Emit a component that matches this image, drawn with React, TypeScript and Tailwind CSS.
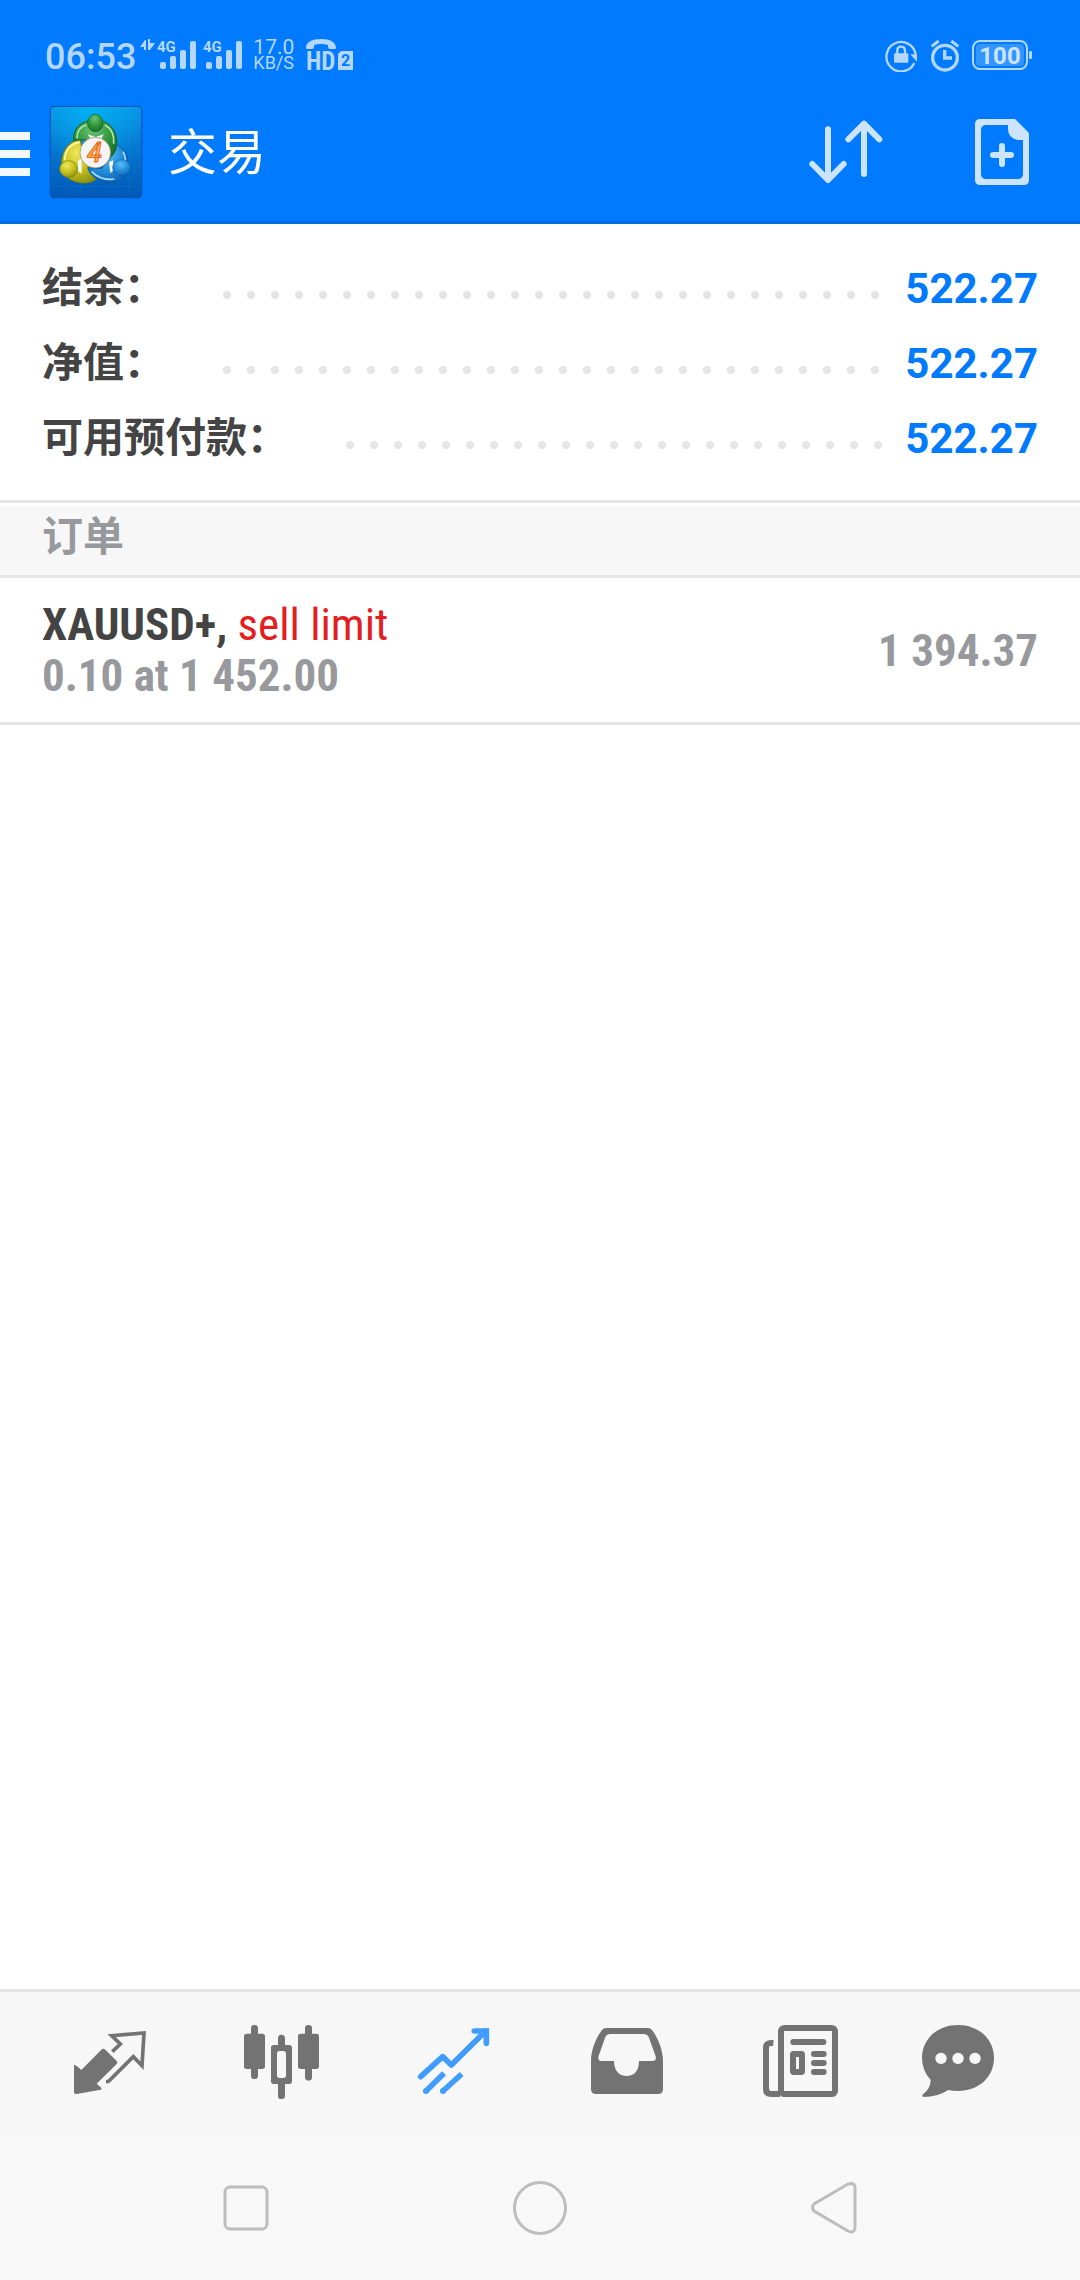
import React, { useState } from 'react';

interface AccountRow {
  label: string;
  value: string;
}

interface Order {
  symbol: string;
  type: string;
  detail: string;
  price: string;
}

const accountRows: AccountRow[] = [
  { label: '结余', value: '522.27' },
  { label: '净值', value: '522.27' },
  { label: '可用预付款', value: '522.27' },
];

const orders: Order[] = [
  { symbol: 'XAUUSD+,', type: 'sell limit', detail: '0.10 at 1 452.00', price: '1 394.37' },
];

/* Status bar icons */
function DataArrows() {
  return (
    <svg width="15" height="32" viewBox="0 0 15 32" fill="currentColor" aria-hidden="true">
      <path d="M0 8 L5 1 H6 V11 H4 V8 Z" />
      <path d="M8 0 H10 V4 H15 L10 11 H8 Z" />
    </svg>
  );
}

function Signal() {
  return (
    <svg width="40" height="32" viewBox="0 0 40 32" fill="currentColor" aria-hidden="true">
      <text x="0" y="13" className="font-bold text-[15px]">4G</text>
      <rect x="3" y="23" width="6" height="7" rx="2" />
      <rect x="13" y="17" width="6" height="13" rx="2" />
      <rect x="23" y="11" width="6" height="19" rx="2" />
      <rect x="33" y="2" width="6" height="28" rx="2" />
    </svg>
  );
}

function HdCall() {
  return (
    <svg width="47" height="32" viewBox="0 0 47 32" fill="currentColor" className="overflow-visible" aria-hidden="true">
      <path d="M0 9 C0 3 6 0 15 0 S30 3 30 9 Q30 10 29 10 H24 Q22 10 22 8 V6 Q15 4 8 6 V8 Q8 10 6 10 H1 Q0 10 0 9 Z" />
      <text x="0" y="31" className="font-['Roboto_Condensed','Liberation_Sans_Narrow',sans-serif] font-bold text-[25px]">HD</text>
      <path d="M35 12 H47 V31 H32 V15 Z" />
      <text x="35" y="27" fill="#007aff" className="font-bold text-[16px]">2</text>
    </svg>
  );
}

function RotationLock() {
  return (
    <svg width="33" height="33" viewBox="0 0 99 99" aria-hidden="true">
      <path d="M88 72 A44 44 0 1 1 92 48" fill="none" stroke="currentColor" strokeWidth="7" />
      <path d="M76 46 H96 V68 Z" fill="currentColor" />
      <rect x="27" y="43" width="43" height="28" rx="3" fill="currentColor" />
      <path d="M37 45 V33 Q37 23 48 23 T60 33 V45" fill="none" stroke="currentColor" strokeWidth="7" />
    </svg>
  );
}

function AlarmClock() {
  return (
    <svg width="30" height="33" viewBox="0 0 90 99" fill="none" stroke="currentColor" aria-hidden="true">
      <circle cx="45" cy="56" r="37" strokeWidth="10" />
      <path d="M44 33 V57 H66" strokeWidth="10" />
      <path d="M5 22 L26 6 M85 22 L64 6" strokeWidth="9" />
    </svg>
  );
}

function Battery() {
  return (
    <svg width="60" height="30" viewBox="0 0 60 30" aria-hidden="true">
      <rect x="1" y="1" width="54" height="28" rx="7" fill="none" stroke="currentColor" strokeWidth="2" />
      <rect x="4" y="4" width="48" height="22" rx="4" fill="#3395ff" />
      <rect x="57" y="11" width="3" height="8" rx="1" fill="currentColor" />
      <text x="28" y="24" textAnchor="middle" fill="#cce4ff" className="font-bold text-[24px]">100</text>
    </svg>
  );
}

/* Toolbar icons */
function AppLogo() {
  return (
    <svg width="94" height="94" viewBox="0 0 282 282" aria-hidden="true">
      <defs>
        <linearGradient id="tile" x1="0" y1="0" x2="0" y2="1">
          <stop offset="0" stopColor="#0a93e6" />
          <stop offset="1" stopColor="#0058b8" />
        </linearGradient>
        <radialGradient id="glow" cx="0.45" cy="0.05" r="0.6">
          <stop offset="0" stopColor="#00b8f5" stopOpacity="0.8" />
          <stop offset="1" stopColor="#00b8f5" stopOpacity="0" />
        </radialGradient>
        <radialGradient id="green" cx="0.45" cy="0.25" r="0.8">
          <stop offset="0" stopColor="#6cc478" />
          <stop offset="0.5" stopColor="#319a3c" />
          <stop offset="1" stopColor="#14692a" />
        </radialGradient>
        <radialGradient id="yellow" cx="0.4" cy="0.3" r="0.8">
          <stop offset="0" stopColor="#efe85a" />
          <stop offset="0.5" stopColor="#c9c21e" />
          <stop offset="1" stopColor="#7f8a10" />
        </radialGradient>
        <radialGradient id="blue" cx="0.45" cy="0.3" r="0.8">
          <stop offset="0" stopColor="#5cbcf2" />
          <stop offset="0.5" stopColor="#2490dc" />
          <stop offset="1" stopColor="#0a5bb0" />
        </radialGradient>
      </defs>
      <rect x="4" y="4" width="274" height="274" rx="12" fill="url(#tile)" />
      <rect x="4" y="4" width="274" height="274" rx="12" fill="url(#glow)" stroke="#0759b5" strokeWidth="4" />
      <path d="M55 8 V274 M95 8 V274 M205 8 V274 M240 8 V274 M8 60 H274 M8 98 H274 M8 245 H274" stroke="#43b6f4" strokeOpacity="0.15" strokeWidth="2" />
      {/* three figures around the badge */}
      <path d="M94 104 C64 106 38 134 38 176 C38 212 66 234 106 234 C126 234 142 226 152 212 L120 184 L104 160 Z" fill="url(#yellow)" stroke="#76800f" strokeWidth="3" />
      <path d="M188 114 C218 118 240 150 236 186 C230 222 206 234 180 232 C146 228 122 212 116 188 L158 190 L182 162 Z" fill="url(#blue)" stroke="#0a55a8" strokeWidth="3" />
      <path d="M74 106 C72 66 100 46 140 46 C186 46 208 84 202 122 C200 142 190 154 178 162 L166 120 L104 104 Z" fill="url(#green)" stroke="#146128" strokeWidth="3" />
      <path d="M47 166 C48 132 66 116 92 112" fill="none" stroke="#faf6a8" strokeWidth="5" />
      <path d="M128 200 C144 216 168 226 196 222 M222 140 C228 150 230 160 229 170" fill="none" stroke="#a6dcfa" strokeWidth="5" />
      <path d="M84 100 C84 76 96 64 112 60 M168 60 C186 70 196 90 194 116" fill="none" stroke="#b4e4b0" strokeWidth="5" />
      <path d="M116 88 L140 96 L164 88 L154 108 H128 Z M88 166 L98 160 V206 L84 196 Z M192 166 L180 172 L184 204 L196 194 Z" fill="#f2f8f4" />
      <ellipse cx="139" cy="54" rx="23" ry="26" fill="url(#green)" stroke="#146128" strokeWidth="2" />
      <ellipse cx="59" cy="192" rx="27" ry="25" fill="url(#yellow)" stroke="#76800f" strokeWidth="2" />
      <ellipse cx="218" cy="188" rx="27" ry="24" fill="url(#blue)" stroke="#0a5bb0" strokeWidth="2" />
      <circle cx="139" cy="143" r="46" fill="#f4f4f6" stroke="#8c7b4c" strokeWidth="2" />
      <text x="137" y="171" textAnchor="middle" fill="#ffb84e" stroke="#e8661a" strokeWidth="3" className="text-[80px] font-medium italic">4</text>
    </svg>
  );
}

function SortArrows() {
  return (
    <svg width="74" height="64" viewBox="0 0 222 192" fill="none" stroke="currentColor" strokeWidth="18" strokeLinecap="round" strokeLinejoin="round" aria-hidden="true">
      <path d="M57 28 V178 M10 132 L57 180 L104 132" />
      <path d="M165 162 V12 M118 58 L165 11 L211 58" />
    </svg>
  );
}

function NewOrder() {
  return (
    <svg width="54" height="66" viewBox="0 0 162 198" aria-hidden="true">
      <path
        fill="currentColor"
        fillRule="evenodd"
        d="M16 0 H117 Q121 0 124 4 L159 39 Q162 42 162 46 V182 Q162 198 146 198 H16 Q0 198 0 182 V16 Q0 0 16 0 Z M34 18 Q18 18 18 34 V164 Q18 180 34 180 H128 Q144 180 144 164 V63 H130 Q99 58 99 30 V18 Z"
      />
      <path d="M81 81 V135 M54 108 H108" stroke="currentColor" strokeWidth="18" strokeLinecap="round" />
    </svg>
  );
}

/* Bottom tab icons, all drawn on a 288 unit grid */
function QuotesIcon() {
  return (
    <>
      <path fill="currentColor" d="M36 144 Q40 142 58 159 L118 98 Q124 93 130 98 L164 132 Q168 137 164 141 L104 200 L118 212 Q120 217 116 218 L44 231 Q36 231 36 224 Z" />
      <path fill="none" stroke="currentColor" strokeWidth="11" d="M151 104 L175 81 L149 56 L246 48 L240 146 L214 119 L142 191 Q138 194 132 194" />
    </>
  );
}

function ChartIcon() {
  return (
    <g fill="currentColor">
      <rect x="51" y="24" width="21" height="162" rx="10" />
      <rect x="30" y="50" width="63" height="106" rx="8" />
      <path d="M142 53 Q153 53 153 64 V84 H166 Q174 84 174 92 V193 Q174 201 166 201 H153 V236 Q153 246 142 246 T132 236 V201 H119 Q111 201 111 193 V92 Q111 84 119 84 H132 V64 Q132 53 142 53 Z" />
      <rect x="129" y="102" width="27" height="81" rx="8" fill="#f7f7f7" />
      <rect x="213" y="24" width="21" height="167" rx="10" />
      <rect x="192" y="50" width="63" height="106" rx="8" />
    </g>
  );
}

function TradeIcon() {
  return (
    <>
      <g fill="none" stroke="currentColor" strokeWidth="17">
        <path d="M44 179 L110 119 L136 144 L239 42" strokeLinecap="round" strokeLinejoin="round" />
        <path d="M205 42 H241 V79" strokeLinecap="round" />
        <path d="M60 222 L114 169 M111 222 L167 171" />
      </g>
      <circle cx="60" cy="222" r="9" fill="currentColor" />
      <circle cx="111" cy="222" r="9" fill="currentColor" />
    </>
  );
}

function HistoryIcon() {
  return (
    <path
      fill="currentColor"
      fillRule="evenodd"
      d="M84 33 H210 Q217 33 222 39 C240 62 255 100 255 132 V216 Q255 231 240 231 H54 Q39 231 39 216 V132 C39 100 54 62 72 39 Q77 33 84 33 Z M98 51 Q86 51 82 60 L62 116 Q58 132 70 132 H108 C108 162 124 177 146 177 S183 162 183 132 H224 Q236 132 233 118 L212 60 Q208 51 196 51 Z"
    />
  );
}

function NewsIcon() {
  return (
    <g fill="none" stroke="currentColor" strokeWidth="18">
      <rect x="93" y="33" width="162" height="198" rx="10" />
      <path d="M70 78 Q48 76 48 92 V216 Q48 231 64 231 H90" />
      <path d="M130 75 H220 M192 111 H221 M192 138 H221 M192 165 H221" strokeLinecap="round" />
      <rect x="129" y="111" width="27" height="54" rx="2" />
    </g>
  );
}

function ChatIcon() {
  return (
    <path
      fill="currentColor"
      fillRule="evenodd"
      d="M108 24 C170 24 216 66 216 123 S170 222 108 222 Q92 222 79 219 Q46 240 6 240 Q-2 238 3 232 Q26 214 26 189 Q0 160 0 123 C0 66 46 24 108 24 Z M57 107 a17 17 0 1 0 0.1 0 Z M108 107 a17 17 0 1 0 0.1 0 Z M159 107 a17 17 0 1 0 0.1 0 Z"
    />
  );
}

const tabs = [
  { id: 'quotes', label: '行情', icon: <QuotesIcon /> },
  { id: 'chart', label: '图表', icon: <ChartIcon /> },
  { id: 'trade', label: '交易', icon: <TradeIcon /> },
  { id: 'history', label: '历史', icon: <HistoryIcon /> },
  { id: 'news', label: '新闻', icon: <NewsIcon /> },
  { id: 'chat', label: '消息', icon: <ChatIcon /> },
];

function StatusBar() {
  return (
    <div className="flex h-[83px] items-center justify-between pt-[27px] pl-[45px] pr-12 text-[#b3d7ff]">
      <div className="flex items-center">
        <span className="mt-1 mr-1 text-[36px] leading-8 font-medium">06:53</span>
        <DataArrows />
        <div className="ml-0.5 flex gap-1.5">
          <Signal />
          <Signal />
        </div>
        <div className="ml-2.5 flex flex-col">
          <span className="text-[21px] leading-4">17.0</span>
          <span className="text-[18px] leading-4">KB/S</span>
        </div>
        <div className="ml-3">
          <HdCall />
        </div>
      </div>
      <div className="flex items-center gap-3">
        <RotationLock />
        <AlarmClock />
        <Battery />
      </div>
    </div>
  );
}

function Toolbar() {
  return (
    <div className="flex h-[138px] items-center pr-[51px]">
      <button aria-label="菜单" className="flex w-[30px] flex-col gap-2.5 pt-1">
        <span className="h-2 w-full bg-[#f2f8ff]" />
        <span className="h-2 w-full bg-[#f2f8ff]" />
        <span className="h-2 w-full bg-[#f2f8ff]" />
      </button>
      <div className="ml-[19px]">
        <AppLogo />
      </div>
      <h1 className="ml-[25px] flex-1 pt-1 text-[49px] text-white">交易</h1>
      <div className="flex items-center gap-[92px] text-[#cce4ff]">
        <button aria-label="排序">
          <SortArrows />
        </button>
        <button aria-label="新订单">
          <NewOrder />
        </button>
      </div>
    </div>
  );
}

function SystemNav() {
  return (
    <div className="grid h-[142px] grid-cols-3 items-center justify-items-center bg-[#f8f8f8] px-[99px] pb-0.5 text-[#bdbdbd]">
      <button aria-label="最近任务">
        <svg width="54" height="54" viewBox="0 0 54 54" fill="none" stroke="currentColor" strokeWidth="3">
          <rect x="6" y="6" width="42" height="42" rx="5" />
        </svg>
      </button>
      <button aria-label="主屏幕">
        <svg width="54" height="54" viewBox="0 0 54 54" fill="none" stroke="currentColor" strokeWidth="3">
          <circle cx="27" cy="27" r="25.5" />
        </svg>
      </button>
      <button aria-label="返回">
        <svg width="54" height="54" viewBox="0 0 54 54" fill="none" stroke="currentColor" strokeWidth="3">
          <path d="M7 23 Q4 26 7 30 L41 50 Q47 53 48 47 V6 Q47 1 41 3 Z" />
        </svg>
      </button>
    </div>
  );
}

export default function App() {
  const [activeTab, setActiveTab] = useState('trade');

  return (
    <div className="flex min-h-screen w-full flex-col bg-white font-[Roboto,'Noto_Sans_CJK_SC',sans-serif]">
      <header className="border-b-3 border-[#006de3] bg-[#007aff]">
        <StatusBar />
        <Toolbar />
      </header>

      <main className="flex-1">
        {/* Account summary */}
        <dl className="border-b-3 border-[#e5e5e5] px-[42px] pt-[27px] pb-6">
          {accountRows.map((row) => (
            <div key={row.label} className="flex h-[75px] items-center">
              <dt className="text-[41px] font-bold text-[#444444]">{row.label}：</dt>
              <div className="mt-3 mr-[18px] ml-[50px] h-2 flex-1 bg-[radial-gradient(circle,#e5e5e5_4px,transparent_4px)] bg-[length:24px_8px]" />
              <dd className="text-[42px] font-bold text-[#007aff]">{row.value}</dd>
            </div>
          ))}
        </dl>

        {/* Pending orders */}
        <section>
          <h2 className="mt-[3px] h-[72px] border-b-3 border-[#e5e5e5] bg-[#f7f7f7] px-[42px] text-[41px] leading-[62px] font-bold text-[#98999d]">
            订单
          </h2>
          <ul>
            {orders.map((order) => (
              <li
                key={order.symbol}
                className="flex h-[147px] items-center justify-between border-b-3 border-[#e5e5e5] px-[42px] font-['Roboto_Condensed','Liberation_Sans_Narrow',sans-serif] text-[45px] leading-[51px] font-bold text-[#98999d]"
              >
                <div>
                  <p className="text-[#444444]">
                    {order.symbol} <span className="font-normal text-[#e31e1e]">{order.type}</span>
                  </p>
                  <p>{order.detail}</p>
                </div>
                <p>{order.price}</p>
              </li>
            ))}
          </ul>
        </section>
      </main>

      <nav className="flex h-[149px] items-center border-t-3 border-[#e5e5e5] bg-[#f7f7f7] px-6">
        {tabs.map((tab) => (
          <button
            key={tab.id}
            aria-label={tab.label}
            onClick={() => setActiveTab(tab.id)}
            className={`flex flex-1 cursor-pointer justify-center ${
              activeTab === tab.id ? 'text-[#409cff]' : 'text-[#737373]'
            }`}
          >
            <svg width="96" height="96" viewBox="0 0 288 288">
              {tab.icon}
            </svg>
          </button>
        ))}
      </nav>
      <SystemNav />
    </div>
  );
}
